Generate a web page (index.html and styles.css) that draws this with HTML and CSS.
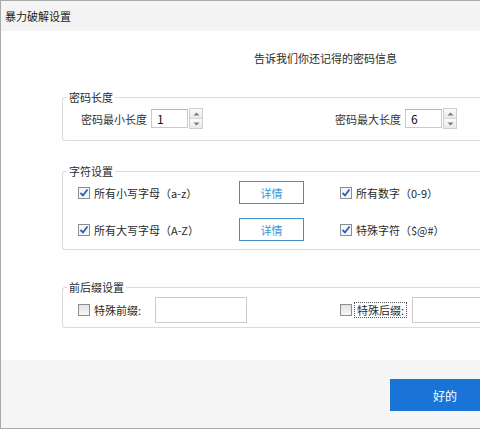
FILE: index.html
```html
<!DOCTYPE html>
<html lang="zh-CN">
<head>
  <meta charset="UTF-8" />
  <meta name="viewport" content="width=device-width, initial-scale=1.0" />
  <title>暴力破解设置</title>
  <link rel="stylesheet" href="styles.css">
</head>
<body>

  <div class="dialog">
    <div class="titlebar">暴力破解设置</div>

    <div class="content">
      <p class="intro">告诉我们你还记得的密码信息</p>

      <fieldset class="group">
        <legend>密码长度</legend>
        <div class="length-row">
          <div class="length-field">
            <span>密码最小长度</span>
            <div class="spin">
              <div class="spin-box">1</div>
              <div class="spin-btns">
                <span class="spin-btn"><svg width="7" height="4" viewBox="0 0 7 4"><path d="M0.5 3.5 L3.5 0.5 L6.5 3.5 Z" fill="#7a7a7a"/></svg></span>
                <span class="spin-btn"><svg width="7" height="4" viewBox="0 0 7 4"><path d="M0.5 0.5 L3.5 3.5 L6.5 0.5 Z" fill="#7a7a7a"/></svg></span>
              </div>
            </div>
          </div>
          <div class="length-field">
            <span>密码最大长度</span>
            <div class="spin">
              <div class="spin-box">6</div>
              <div class="spin-btns">
                <span class="spin-btn"><svg width="7" height="4" viewBox="0 0 7 4"><path d="M0.5 3.5 L3.5 0.5 L6.5 3.5 Z" fill="#7a7a7a"/></svg></span>
                <span class="spin-btn"><svg width="7" height="4" viewBox="0 0 7 4"><path d="M0.5 0.5 L3.5 3.5 L6.5 0.5 Z" fill="#7a7a7a"/></svg></span>
              </div>
            </div>
          </div>
        </div>
      </fieldset>

      <fieldset class="group group-chars">
        <legend>字符设置</legend>
        <div class="chars-grid">
          <label class="check"><span class="box checked"><svg width="10" height="10" viewBox="0 0 10 10"><path d="M1.5 5 L4 7.5 L8.5 1.5" fill="none" stroke="#2b5fae" stroke-width="1.8"/></svg></span>所有小写字母（a-z）</label>
          <button class="detail-btn">详情</button>
          <label class="check"><span class="box checked"><svg width="10" height="10" viewBox="0 0 10 10"><path d="M1.5 5 L4 7.5 L8.5 1.5" fill="none" stroke="#2b5fae" stroke-width="1.8"/></svg></span>所有数字（0-9）</label>

          <label class="check"><span class="box checked"><svg width="10" height="10" viewBox="0 0 10 10"><path d="M1.5 5 L4 7.5 L8.5 1.5" fill="none" stroke="#2b5fae" stroke-width="1.8"/></svg></span>所有大写字母（A-Z）</label>
          <button class="detail-btn">详情</button>
          <label class="check"><span class="box checked"><svg width="10" height="10" viewBox="0 0 10 10"><path d="M1.5 5 L4 7.5 L8.5 1.5" fill="none" stroke="#2b5fae" stroke-width="1.8"/></svg></span>特殊字符（$@#）</label>
        </div>
      </fieldset>

      <fieldset class="group group-affix">
        <legend>前后缀设置</legend>
        <div class="affix-row">
          <div class="affix-field">
            <label class="check"><span class="box"></span>特殊前缀:</label>
            <div class="text-box"></div>
          </div>
          <div class="affix-field affix-last">
            <label class="check check-focus"><span class="box"></span><span class="focus-text">特殊后缀:</span></label>
            <div class="text-box"></div>
          </div>
        </div>
      </fieldset>
    </div>

    <div class="footer">
      <button class="ok-btn">好的</button>
    </div>
  </div>

</body>
</html>
```

FILE: styles.css
```css
* {
  box-sizing: border-box;
}

html, body {
  margin: 0;
  padding: 0;
  overflow: hidden;
  background: #fff;
  font-family: "Noto Sans CJK SC", "Microsoft YaHei", sans-serif;
  font-size: 11px;
  color: #333;
}

/* window is wider than the visible area, right side is cut off */
.dialog {
  width: 100%;
  height: 429px;
  border: 1px solid #a9a9a9;
  border-right: none;
  display: flex;
  flex-direction: column;
  background: #fff;
  overflow: hidden;
}

.titlebar {
  height: 30px;
  line-height: 30px;
  padding-left: 4px;
  background: #f4f4f4;
  color: #222;
}

.content {
  flex: 1;
  padding-top: 20px;
}

.intro {
  margin: 0 0 25px;
  padding-left: 170px;
  line-height: 14px;
  text-align: center;
  color: #2a2a2a;
}

/* group boxes */
.group {
  margin: 0 0 0 61px;
  padding: 4px 0 11px;
  border: 1px solid #dcdcdc;
  border-right: none;
  border-radius: 3px 0 0 3px;
  min-width: 0;
}

.group legend {
  margin-left: 4px;
  padding: 0 2px;
  line-height: 14px;
  color: #2a2a2a;
}

.group-chars {
  margin-top: 23px;
  padding: 3px 0 8px;
}

.group-affix {
  margin-top: 30px;
  padding: 3px 0 4px;
}

/* length spinners */
.length-row {
  display: flex;
  padding-left: 18px;
}

.length-field {
  width: 254px;
  flex-shrink: 0;
  display: flex;
  align-items: center;
  gap: 4px;
}

.length-field:last-child {
  width: auto;
}

.spin {
  display: flex;
  align-items: center;
  gap: 1px;
}

.spin-box {
  width: 37px;
  height: 19px;
  border: 1px solid #c9c9c9;
  border-top-color: #b5b5b5;
  padding-left: 5px;
  line-height: 17px;
  font-size: 12px;
  color: #111;
}

.spin-btns {
  display: flex;
  flex-direction: column;
  width: 14px;
  height: 21px;
  border: 1px solid #cfcfcf;
  background: #f7f7f7;
}

.spin-btn {
  flex: 1;
  display: flex;
  align-items: center;
  justify-content: center;
  background: linear-gradient(#fbfbfb, #e9e9e9);
}

.spin-btn + .spin-btn {
  border-top: 1px solid #d6d6d6;
}

/* character options */
.chars-grid {
  display: grid;
  grid-template-columns: 161px 101px auto;
  grid-auto-rows: 23px;
  row-gap: 14px;
  align-items: center;
  padding-left: 15px;
}

.check {
  display: flex;
  align-items: center;
  gap: 4px;
  white-space: nowrap;
  color: #2a2a2a;
}

.box {
  width: 12px;
  height: 12px;
  border: 1px solid #8d8d8d;
  background: linear-gradient(#e4e4e4, #f6f6f6);
  display: flex;
  align-items: center;
  justify-content: center;
  flex-shrink: 0;
}

.box.checked {
  background: #f4f6f9;
}

.detail-btn {
  width: 65px;
  height: 23px;
  padding: 0;
  border: 1px solid #3d8fc6;
  background: #fff;
  color: #3496d6;
  font-family: inherit;
  font-size: 11px;
}

/* prefix / suffix */
.affix-row {
  display: flex;
  padding-left: 15px;
}

.affix-field {
  width: 262px;
  flex-shrink: 0;
  display: flex;
  align-items: center;
}

.affix-field .check {
  margin-right: 14px;
}

.affix-last {
  width: auto;
  flex: 1;
}

.affix-last .check {
  gap: 2px;
  margin-right: 5px;
}

.focus-text {
  border: 1px dotted #555;
  padding: 0 2px;
  line-height: 14px;
}

.text-box {
  width: 92px;
  height: 26px;
  border: 1px solid #cbcbcb;
  background: #fff;
}

.affix-last .text-box {
  flex: 1;
  border-right: none;
}

/* bottom bar */
.footer {
  height: 68px;
  background: #f5f5f5;
  padding: 19px 0 0 389px;
}

.ok-btn {
  width: 90px;
  height: 32px;
  padding: 0 0 0 20px;
  border: none;
  background: #1a74d7;
  color: #fff;
  font-family: inherit;
  font-size: 12px;
}
```
